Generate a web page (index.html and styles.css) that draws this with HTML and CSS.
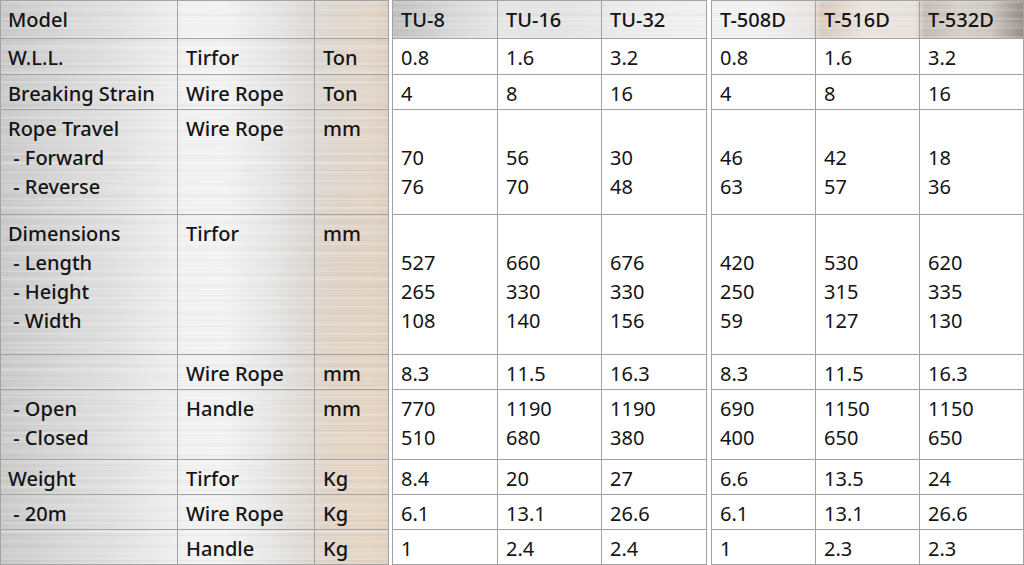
FILE: index.html
```html
<!DOCTYPE html>
<html lang="en">
<head>
<meta charset="utf-8">
<title>Tirfor specifications</title>
<link rel="stylesheet" href="styles.css">
</head>
<body>
<table class="spec">
  <colgroup>
    <col class="w-c1"><col class="w-c2"><col class="w-c3"><col class="w-gap1">
    <col class="w-d105"><col class="w-d104"><col class="w-d105"><col class="w-gap2">
    <col class="w-d104"><col class="w-d104"><col class="w-d104">
  </colgroup>
  <tbody>
    <tr class="r-head">
      <td class="lab first">Model</td><td class="lab"></td><td class="lab"></td><td class="gap"></td>
      <td class="hd">TU-8</td><td class="hd">TU-16</td><td class="hd">TU-32</td><td class="gap"></td>
      <td class="hd">T-508D</td><td class="hd">T-516D</td><td class="hd">T-532D</td>
    </tr>
    <tr class="r-36">
      <td class="lab first">W.L.L.</td><td class="lab">Tirfor</td><td class="lab">Ton</td><td class="gap"></td>
      <td class="val">0.8</td><td class="val">1.6</td><td class="val">3.2</td><td class="gap"></td>
      <td class="val">0.8</td><td class="val">1.6</td><td class="val">3.2</td>
    </tr>
    <tr class="r-35">
      <td class="lab first">Breaking Strain</td><td class="lab">Wire Rope</td><td class="lab">Ton</td><td class="gap"></td>
      <td class="val">4</td><td class="val">8</td><td class="val">16</td><td class="gap"></td>
      <td class="val">4</td><td class="val">8</td><td class="val">16</td>
    </tr>
    <tr class="r-105">
      <td class="lab first">Rope Travel<br>&nbsp;- Forward<br>&nbsp;- Reverse</td><td class="lab">Wire Rope</td><td class="lab">mm</td><td class="gap"></td>
      <td class="val">&nbsp;<br>70<br>76</td><td class="val">&nbsp;<br>56<br>70</td><td class="val">&nbsp;<br>30<br>48</td><td class="gap"></td>
      <td class="val">&nbsp;<br>46<br>63</td><td class="val">&nbsp;<br>42<br>57</td><td class="val">&nbsp;<br>18<br>36</td>
    </tr>
    <tr class="r-140">
      <td class="lab first">Dimensions<br>&nbsp;- Length<br>&nbsp;- Height<br>&nbsp;- Width</td><td class="lab">Tirfor</td><td class="lab">mm</td><td class="gap"></td>
      <td class="val">&nbsp;<br>527<br>265<br>108</td><td class="val">&nbsp;<br>660<br>330<br>140</td><td class="val">&nbsp;<br>676<br>330<br>156</td><td class="gap"></td>
      <td class="val">&nbsp;<br>420<br>250<br>59</td><td class="val">&nbsp;<br>530<br>315<br>127</td><td class="val">&nbsp;<br>620<br>335<br>130</td>
    </tr>
    <tr class="r-35">
      <td class="lab first"></td><td class="lab">Wire Rope</td><td class="lab">mm</td><td class="gap"></td>
      <td class="val">8.3</td><td class="val">11.5</td><td class="val">16.3</td><td class="gap"></td>
      <td class="val">8.3</td><td class="val">11.5</td><td class="val">16.3</td>
    </tr>
    <tr class="r-70">
      <td class="lab first">&nbsp;- Open<br>&nbsp;- Closed</td><td class="lab">Handle</td><td class="lab">mm</td><td class="gap"></td>
      <td class="val">770<br>510</td><td class="val">1190<br>680</td><td class="val">1190<br>380</td><td class="gap"></td>
      <td class="val">690<br>400</td><td class="val">1150<br>650</td><td class="val">1150<br>650</td>
    </tr>
    <tr class="r-35">
      <td class="lab first">Weight</td><td class="lab">Tirfor</td><td class="lab">Kg</td><td class="gap"></td>
      <td class="val">8.4</td><td class="val">20</td><td class="val">27</td><td class="gap"></td>
      <td class="val">6.6</td><td class="val">13.5</td><td class="val">24</td>
    </tr>
    <tr class="r-35">
      <td class="lab first">&nbsp;- 20m</td><td class="lab">Wire Rope</td><td class="lab">Kg</td><td class="gap"></td>
      <td class="val">6.1</td><td class="val">13.1</td><td class="val">26.6</td><td class="gap"></td>
      <td class="val">6.1</td><td class="val">13.1</td><td class="val">26.6</td>
    </tr>
    <tr class="r-35">
      <td class="lab first"></td><td class="lab">Handle</td><td class="lab">Kg</td><td class="gap"></td>
      <td class="val">1</td><td class="val">2.4</td><td class="val">2.4</td><td class="gap"></td>
      <td class="val">1</td><td class="val">2.3</td><td class="val">2.3</td>
    </tr>
  </tbody>
</table>
</body>
</html>
```

FILE: styles.css
```css
html, body {
  margin: 0;
  padding: 0;
  background: #ffffff;
}

.spec {
  width: 1024px;
  table-layout: fixed;
  border-collapse: separate;
  border-spacing: 0;
  font-family: "Noto Sans", "Open Sans", "Liberation Sans", sans-serif;
  font-size: 20px;
  line-height: 29px;
  color: #141414;
  background-color: #e4e4e4;
  background-image:
    repeating-linear-gradient(to bottom, rgba(0,0,0,0.018) 0 1px, rgba(0,0,0,0) 1px 5px),
    repeating-linear-gradient(to bottom, rgba(255,255,255,0.16) 0 2px, rgba(255,255,255,0) 2px 9px),
    repeating-linear-gradient(to bottom, rgba(0,0,0,0.016) 0 3px, rgba(0,0,0,0) 3px 13px),
    repeating-linear-gradient(to bottom, rgba(255,255,255,0.1) 0 4px, rgba(255,255,255,0) 4px 23px),
    radial-gradient(ellipse 90px 220px at 355px 470px, rgba(232,212,190,0.6), rgba(232,212,190,0)),
    radial-gradient(ellipse 80px 160px at 350px 280px, rgba(222,205,188,0.45), rgba(222,205,188,0)),
    linear-gradient(to right,
      #cacaca 0px, #d5d5d5 50px, #e2e2e2 120px, #f2f2f2 185px, #f3f3f3 225px,
      #e7e7e7 270px, #dcdad8 312px, #e0d7ce 340px, #e4d7ca 370px, #ddd0c3 390px,
      #c2c2c2 394px, #d4d4d4 440px, #e6e6e6 497px, #e4e4e4 560px, #ebebeb 620px,
      #f2f2f2 706px, #f2f2f2 760px, #e8e6e4 812px, #dacbbd 822px, #ece5de 865px,
      #e8e2dc 915px, #c6bdb4 925px, #d8d1ca 960px, #cfc9c3 990px, #958d86 1024px);
}

.w-c1 { width: 178px; }
.w-c2 { width: 137px; }
.w-c3 { width: 74px; }
.w-gap1 { width: 4px; }
.w-gap2 { width: 5px; }
.w-d105 { width: 105px; }
.w-d104 { width: 104px; }

.spec td {
  box-sizing: border-box;
  vertical-align: top;
  padding: 4px 0 0 8px;
  border-right: 1px solid #a3a3a3;
  border-bottom: 1px solid #a3a3a3;
  white-space: nowrap;
  overflow: hidden;
}

.spec tr:first-child td {
  border-top: 1px solid #a3a3a3;
}

.spec td.first {
  border-left: 1px solid #a3a3a3;
  padding-left: 7px;
}

.spec td.lab,
.spec td.hd {
  font-weight: 500;
  background: transparent;
}

.spec td.val {
  background: #ffffff;
  font-weight: 400;
}

.spec td.gap {
  background: #ffffff;
  padding: 0;
  border-bottom: none;
}

.spec tr:first-child td.gap {
  border-top: none;
}

.r-head { height: 39px; }
.r-36 { height: 36px; }
.r-35 { height: 35px; }
.r-105 { height: 105px; }
.r-140 { height: 140px; }
.r-70 { height: 70px; }
```
